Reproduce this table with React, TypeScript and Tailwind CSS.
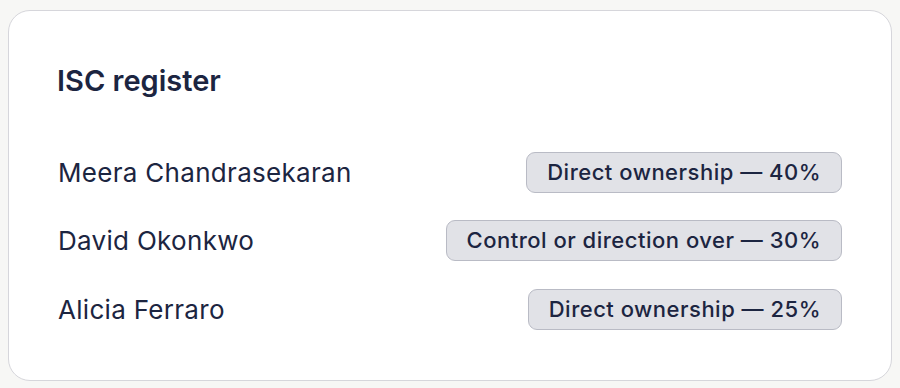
const rows = [
  { name: "Meera Chandrasekaran", nature: "Direct ownership — 40%" },
  { name: "David Okonkwo", nature: "Control or direction over — 30%" },
  { name: "Alicia Ferraro", nature: "Direct ownership — 25%" },
];

export default function App() {
  return (
    <div
      className="w-[900px] h-[388px] bg-[#f7f7f5] pt-[10px] pl-[8px]"
      style={{ fontFamily: "Inter, 'Noto Sans', sans-serif" }}
    >
      <section className="w-[884px] h-[371px] bg-white border-[1.5px] border-[#d6d6db] rounded-[22px] px-[49px] pt-[51.5px]">
        <h2 className="text-[29px] leading-[36px] font-semibold text-[#1c2541] -ml-[1px]">
          ISC register
        </h2>

        <div className="mt-[53px] flex flex-col gap-[27.5px]">
          {rows.map((r) => (
            <div key={r.name} className="flex items-center justify-between h-[41px]">
              <span className="text-[26px] tracking-[0.3px] text-[#1c2541]">{r.name}</span>
              <span className="h-[41px] flex items-center px-[20px] rounded-[9px] bg-[#e1e2e7] border-[1.5px] border-[#b9bbc5] text-[22px] tracking-[0.5px] font-medium text-[#1c2541]">
                {r.nature}
              </span>
            </div>
          ))}
        </div>
      </section>
    </div>
  );
}
